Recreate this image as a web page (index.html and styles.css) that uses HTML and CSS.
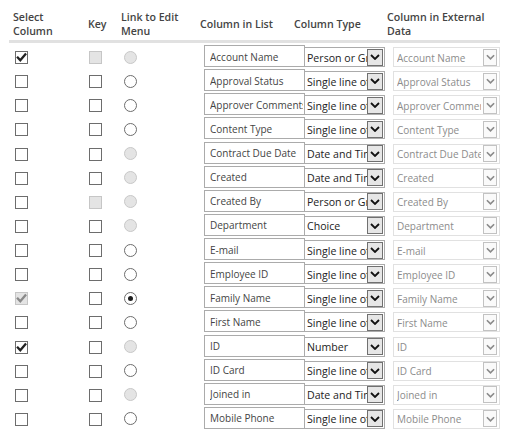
FILE: index.html
```html
<!DOCTYPE html>
<html>
<head>
<meta charset="utf-8">
<link rel="stylesheet" href="styles.css">
</head>
<body>
<div class="tbl">
  <div class="head">
    <div class="h h1">Select<br>Column</div>
    <div class="h h2">Key</div>
    <div class="h h3">Link to Edit<br>Menu</div>
    <div class="h h4">Column in List</div>
    <div class="h h5">Column Type</div>
    <div class="h h6">Column in External<br>Data</div>
  </div>
  <div class="rows" id="rows"></div>
</div>
<script src="app.js"></script>
</body>
</html>
```

FILE: app.js
```js
var data = [
  ["Account Name","Person or Group","c","d","d"],
  ["Approval Status","Single line of text","u","u","u"],
  ["Approver Comments","Single line of text","u","u","u"],
  ["Content Type","Single line of text","u","u","u"],
  ["Contract Due Date","Date and Time","u","u","d"],
  ["Created","Date and Time","u","u","d"],
  ["Created By","Person or Group","u","d","d"],
  ["Department","Choice","u","u","d"],
  ["E-mail","Single line of text","u","u","u"],
  ["Employee ID","Single line of text","u","u","u"],
  ["Family Name","Single line of text","dc","u","c"],
  ["First Name","Single line of text","u","u","u"],
  ["ID","Number","c","u","d"],
  ["ID Card","Single line of text","u","u","u"],
  ["Joined in","Date and Time","u","u","d"],
  ["Mobile Phone","Single line of text","u","u","u"]
];
var check = '<svg viewBox="0 0 11 11" width="11" height="11"><polyline points="1.8,5.6 4.3,8.2 9.3,2.4" fill="none" stroke-width="2.3" stroke-linecap="square"/></svg>';
var chev = '<svg viewBox="0 0 10 6" width="10" height="6"><polyline points="1,1 5,5 9,1" fill="none" stroke-width="1.8"/></svg>';
function cb(state, extra) {
  var cls = "cb " + extra;
  if (state === "c") return '<span class="' + cls + ' on">' + check + '</span>';
  if (state === "d") return '<span class="' + cls + ' dis"></span>';
  if (state === "dc") return '<span class="' + cls + ' dis on">' + check + '</span>';
  return '<span class="' + cls + '"></span>';
}
function rd(state) {
  if (state === "c") return '<span class="rd on"><span class="dot"></span></span>';
  if (state === "d") return '<span class="rd dis"></span>';
  return '<span class="rd"></span>';
}
var html = "";
data.forEach(function (r) {
  html += '<div class="row">' +
    cb(r[2], "cb1") + cb(r[3], "cb2") + rd(r[4]) +
    '<span class="inp"><span class="t">' + r[0] + '</span></span>' +
    '<span class="sel"><span class="t">' + r[1] + '</span><span class="arr">' + chev + '</span></span>' +
    '<span class="ext"><span class="t">' + r[0] + '</span><span class="arr">' + chev + '</span></span>' +
    '</div>';
});
document.getElementById("rows").innerHTML = html;
```

FILE: styles.css
```css
html, body {
  margin: 0;
  padding: 0;
  background: #fff;
}
body {
  font-family: "Open Sans", "Noto Sans", sans-serif;
  color: #444;
}
.tbl {
  margin-left: 9px;
  width: 491px;
}
.head {
  display: flex;
  align-items: center;
  height: 33px;
  padding-top: 7px;
  border-bottom: 3px solid #e1e1e1;
}
.h {
  font-size: 10.6px;
  font-weight: 600;
  line-height: 14px;
  padding-left: 4px;
  box-sizing: border-box;
  color: #444;
  white-space: nowrap;
}
.h1 { width: 75px; }
.h2 { width: 33px; }
.h3 { width: 79px; }
.h4 { width: 94px; }
.h5 { width: 93px; }
.h6 { width: 117px; }
.rows {
  padding-top: 2px;
}
.row {
  display: flex;
  align-items: flex-start;
  height: 24.13px;
  font-size: 10px;
}
.cb {
  box-sizing: border-box;
  width: 13px;
  height: 13px;
  margin-top: 6px;
  border: 1px solid #6d6d6d;
  background: #fff;
  display: flex;
  align-items: center;
  justify-content: center;
  flex: none;
}
.cb svg { stroke: #222; display: block; }
.cb.dis { border-color: #c6c6c6; background: #e4e4e4; }
.cb.dis svg { stroke: #8a8a8a; }
.cb1 { margin-left: 6px; }
.cb2 { margin-left: 61px; }
.rd {
  box-sizing: border-box;
  width: 13px;
  height: 13px;
  margin-top: 5.5px;
  margin-left: 22px;
  border: 1px solid #6d6d6d;
  border-radius: 50%;
  background: #fff;
  display: flex;
  align-items: center;
  justify-content: center;
  flex: none;
}
.rd.dis { border-color: #c8c8c8; background: #e4e4e4; }
.rd .dot { width: 5px; height: 5px; border-radius: 50%; background: #1e1e1e; }
.inp {
  box-sizing: border-box;
  width: 101px;
  height: 22px;
  margin-left: 67px;
  border: 1px solid #ababab;
  background: #fff;
  padding: 1px 1px 0 5px;
  display: flex;
  align-items: center;
  flex: none;
  overflow: hidden;
}
.t {
  white-space: nowrap;
  overflow: hidden;
  flex: 1;
  min-width: 0;
}
.sel {
  box-sizing: border-box;
  width: 81px;
  height: 20px;
  margin-top: 2px;
  margin-left: -1px;
  border: 1px solid #ababab;
  background: #fff;
  padding: 1px 1px 1px 2px;
  display: flex;
  align-items: center;
  flex: none;
  color: #222;
  font-size: 10.6px;
}
.sel .t { padding-top: 1px; }
.arr {
  box-sizing: border-box;
  width: 16px;
  height: 17px;
  border: 1px solid #707070;
  background: #e6e6e6;
  display: flex;
  align-items: center;
  justify-content: center;
  flex: none;
}
.arr svg { display: block; stroke: #111; }
.ext {
  box-sizing: border-box;
  width: 107px;
  height: 20px;
  margin-top: 2px;
  margin-left: 8px;
  border: 1px solid #e1e1e1;
  background: #fff;
  padding: 1px 2px 1px 3px;
  display: flex;
  align-items: center;
  flex: none;
  color: #8c8c8c;
}
.ext .t { margin-right: 2px; padding-top: 1px; }
.ext .arr {
  width: 14px;
  border-color: #c2c2c2;
  background: #fafafa;
}
.ext .arr svg { stroke: #8a8a8a; width: 9px; }
```
